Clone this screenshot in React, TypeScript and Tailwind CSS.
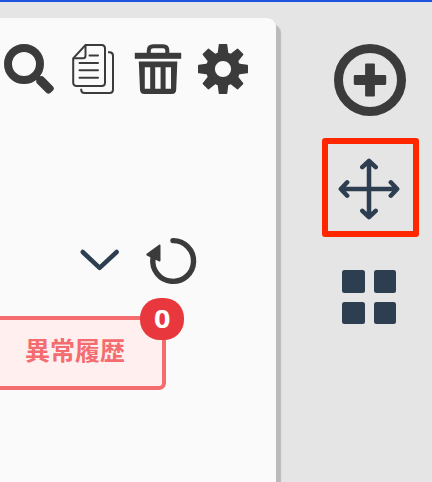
const DARK = "#3b3b3b";
const NAVY = "#2c3e50";

function SearchIcon() {
  return (
    <svg className="h-[50px] w-[50px]" viewBox="0 0 50 50" fill="none">
      <circle cx="20" cy="20" r="16" stroke={DARK} strokeWidth="8" />
      <path d="M29 33 33 29 36.5 32.2Q38.2 31.6 39.5 32.8L49 42.4Q50.8 44.4 49 46.4L46.3 49.1Q44.4 50.6 42.6 49L33 39.4Q31.8 38.2 32.4 36.5Z" fill={DARK} />
    </svg>
  );
}

function CopyIcon() {
  return (
    <svg className="ml-[18px] h-[50px] w-[42px]" viewBox="0 0 42 50" fill="none" stroke={DARK} strokeWidth="2">
      <path d="M13.5 1H29.5Q33 1 33 4.5V38.5Q33 42 29.5 42H4.7Q1.2 42 1.2 38.5V14.3Z" />
      <path d="M13.5 1V11.8Q13.5 14.3 11 14.3H1.2" />
      <path d="M17.5 11.5H26M7.5 19H26M7.5 26.2H26M7.5 33.7H26" strokeLinecap="round" />
      <path d="M36 8.2H37.6Q41 8.2 41 11.7V45.5Q41 49 37.6 49H12.7Q9.2 49 9.2 45.5V44.8" />
    </svg>
  );
}

function TrashIcon() {
  return (
    <svg className="ml-5 h-[50px] w-[48px]" viewBox="0 0 48 50" fill="none">
      <path d="M14.8 9V6.5Q14.8 2.2 19.3 2.2H29Q33.3 2.2 33.3 6.5V9" stroke={DARK} strokeWidth="4" />
      <rect x="0.8" y="8.8" width="46.4" height="6" fill={DARK} />
      <path
        fill={DARK}
        fillRule="evenodd"
        d="M4.8 17.4H43.3L42.2 46Q41.8 50 38 50H10.2Q6.4 50 6 46ZM10.8 23.2V44.7H16.2V23.2ZM21.2 23.2V44.7H26.6V23.2ZM31.6 23.2V44.7H37V23.2Z"
      />
    </svg>
  );
}

function GearIcon() {
  const angles = [0, 45, 90, 135, 180, 225, 270, 315];
  return (
    <svg className="ml-4 h-[50px] w-[50px]" viewBox="-25 -25 50 50" fill={DARK}>
      <circle r="12.6" fill="none" stroke={DARK} strokeWidth="9" />
      {angles.map((a) => (
        <path key={a} transform={`rotate(${a})`} d="M-5.4-15-4.3-24.2Q-4.2-25-3.4-25H3.4Q4.2-25 4.3-24.2L5.4-15Z" />
      ))}
    </svg>
  );
}

function RefreshIcon() {
  return (
    <svg className="ml-[26px] h-[50px] w-[52px]" viewBox="0 0 52 50" fill="none">
      <path d="M27 4.6A20.4 20.4 0 1 1 7 22" stroke={DARK} strokeWidth="5.4" strokeLinecap="round" />
      <path d="M.6 17.7 13.4 8.6Q14.5 8 14.5 9.8V24.5Q14.3 26.2 12.7 25.2L1.2 19.8Q-.2 18.8.6 17.7Z" fill={DARK} />
    </svg>
  );
}

function MoveIcon() {
  return (
    <svg
      className="h-[62px] w-[62px]"
      viewBox="-31 -31 62 62"
      fill="none"
      stroke={NAVY}
      strokeWidth="4.5"
      strokeLinecap="round"
      strokeLinejoin="round"
    >
      <path d="M0-28V28M-28 0H28M-6.7-21.8 0-28.2 6.7-21.8M-6.7 21.8 0 28.2 6.7 21.8M-21.8-6.7-28.2 0-21.8 6.7M21.8-6.7 28.2 0 21.8 6.7" />
    </svg>
  );
}

export default function App() {
  return (
    <div className="flex h-[482px] w-[432px] flex-col overflow-hidden border-t-2 border-[#1f53df] bg-[#e5e5e5] font-['Noto_Sans_CJK_JP',sans-serif]">
      <div className="flex min-h-0 flex-1">
        <main className="mt-4 h-[500px] w-[276px] shrink-0 rounded-tr-[9px] bg-[#fafafa] pt-[26px] shadow-[5px_6px_1px_#bbbbbb]">
          <div className="flex pl-1">
            <SearchIcon />
            <CopyIcon />
            <TrashIcon />
            <GearIcon />
          </div>
          <div className="mt-[142px] flex items-center pl-[79px]">
            <svg className="h-[26px] w-[41px]" viewBox="0 0 41 26" fill="none">
              <path d="M3.7 4 20.6 19.8 37.7 4" stroke={NAVY} strokeWidth="4.5" strokeLinecap="round" strokeLinejoin="round" />
            </svg>
            <RefreshIcon />
          </div>
          <button className="relative mt-[30px] flex h-[74px] w-[166px] items-center rounded-r-[7px] border-4 border-l-0 border-[#f46c6f] bg-[#fff0ef] pb-[7px] pl-[25px] text-[25px] leading-none font-bold text-[#f46c6f]">
            異常履歴
            <span className="absolute -top-[22px] -right-[22px] flex h-[42px] w-11 items-center justify-center rounded-[20px] bg-[#e8383d] pb-px font-['Open_Sans',sans-serif] text-[25px] leading-none font-bold text-white">
              <span className="scale-x-115">0</span>
            </span>
          </button>
        </main>
        <aside className="ml-[46px] flex w-[97px] flex-col items-center pt-[42px]">
          <svg className="mr-px h-[72px] w-[72px] shrink-0" viewBox="-36 -36 72 72">
            <circle r="31.5" fill="none" stroke={DARK} strokeWidth="9" />
            <path d="M-3.8-16.5H3.8Q4.9-16.5 4.9-15.4V-4.9H15Q16.2-4.9 16.2-3.8V3.8Q16.2 4.9 15 4.9H4.9V15.4Q4.9 16.5 3.8 16.5H-3.8Q-4.9 16.5-4.9 15.4V4.9H-15Q-16.2 4.9-16.2 3.8V-3.8Q-16.2-4.9-15-4.9H-4.9V-15.4Q-4.9-16.5-3.8-16.5Z" fill={DARK} />
          </svg>
          <div className="mt-[22px] flex h-[99px] w-[97px] shrink-0 items-center justify-center rounded-[3px] border-6 border-[#ff2600] pt-[2px] pr-[3px]">
            <MoveIcon />
          </div>
          <div className="mt-[33px] mr-[3px] grid shrink-0 grid-cols-2 gap-[9px]">
            <span className="h-[22.5px] w-[22.5px] rounded-[2.5px] bg-[#2c3e50]" />
            <span className="h-[22.5px] w-[22.5px] rounded-[2.5px] bg-[#2c3e50]" />
            <span className="h-[22.5px] w-[22.5px] rounded-[2.5px] bg-[#2c3e50]" />
            <span className="h-[22.5px] w-[22.5px] rounded-[2.5px] bg-[#2c3e50]" />
          </div>
        </aside>
      </div>
    </div>
  );
}
